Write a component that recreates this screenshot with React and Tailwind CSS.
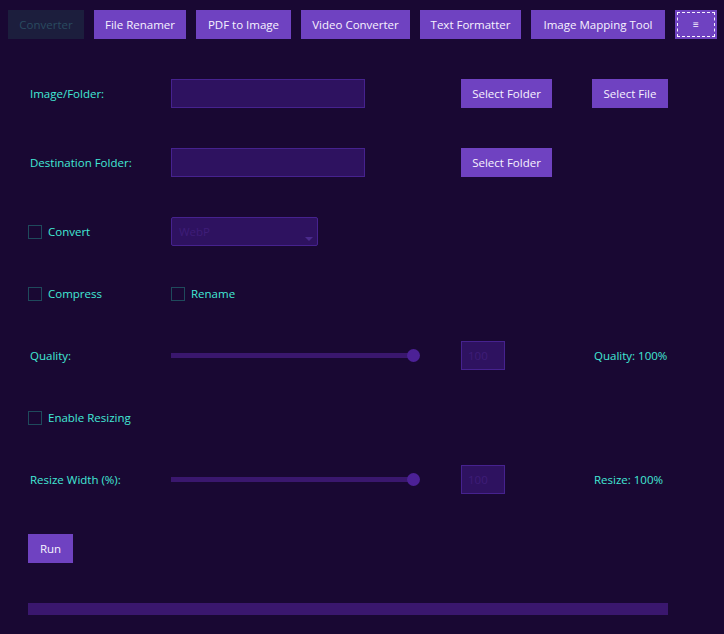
const navItems = [
  ['File Renamer', 'w-[92px]'],
  ['PDF to Image', 'w-[95px]'],
  ['Video Converter', 'w-[109px]'],
  ['Text Formatter', 'w-[101px]'],
  ['Image Mapping Tool', 'w-[134px]'],
];

const Btn = ({ children, className = '' }) => (
  <button className={`h-[29px] shrink-0 whitespace-nowrap bg-[#6f42c1] text-[#f7f2ff] ${className}`}>{children}</button>
);

const Label = ({ children }) => <span className="whitespace-nowrap pl-[2px] text-[#42e8d6]">{children}</span>;

const Check = ({ label }) => (
  <label className="flex items-center gap-[6px] whitespace-nowrap text-[#42e8d6]">
    <span className="h-[14px] w-[14px] border border-[#1f4a5c]" />
    {label}
  </label>
);

const Slider = () => (
  <div className="relative flex h-[29px] w-[250px] items-center">
    <div className="h-[5px] w-[243px] bg-[#3a176e]" />
    <div className="absolute left-[236px] top-[8px] h-[13px] w-[13px] rounded-full bg-[#4c2196]" />
  </div>
);

const Spin = () => (
  <div className="flex h-[29px] w-[44px] items-center border border-[#46228f] bg-[#2e1260] pl-[6px] text-[#3e1d78]">100</div>
);

const Row = ({ children, className = '' }) => (
  <div className={`grid h-[29px] grid-cols-[143px_290px_131px_1fr] items-center ${className}`}>{children}</div>
);

export default function App() {
  return (
    <div className="h-[634px] w-[724px] bg-[#190833] text-[11.5px] font-['Open_Sans',sans-serif]">
      <div className="flex gap-[10px] pl-[8px] pt-[10px]">
        <button className="h-[29px] w-[76px] shrink-0 bg-[#1c1e3d] text-[#2a4b60]">Converter</button>
        {navItems.map(([n, w]) => (
          <Btn key={n} className={w}>{n}</Btn>
        ))}
        <button className="flex h-[29px] w-[42px] shrink-0 items-center justify-center bg-[#6f42c1] p-[2px]">
          <span className="flex h-full w-full items-center justify-center border border-dashed border-[#f7f2ff] text-[10px] text-[#f7f2ff]">≡</span>
        </button>
      </div>

      <div className="pl-[28px]">
        <Row className="mt-[40px]">
          <Label>Image/Folder:</Label>
          <div className="h-[29px] w-[194px] border border-[#46228f] bg-[#2e1260]" />
          <div><Btn className="w-[91px]">Select Folder</Btn></div>
          <div><Btn className="w-[76px]">Select File</Btn></div>
        </Row>

        <Row className="mt-[40px]">
          <Label>Destination Folder:</Label>
          <div className="h-[29px] w-[194px] border border-[#46228f] bg-[#2e1260]" />
          <div><Btn className="w-[91px]">Select Folder</Btn></div>
          <div />
        </Row>

        <Row className="mt-[40px]">
          <Check label="Convert" />
          <div className="relative flex h-[29px] w-[147px] items-center rounded-[2px] border border-[#46228f] bg-[#2e1260] pl-[7px] text-[#3e1d78]">
            WebP
            <svg className="absolute right-[4px] top-[19px]" width="8" height="5" viewBox="0 0 8 5">
              <path d="M0 0h8L4 4z" fill="#4a2a8c" />
            </svg>
          </div>
          <div />
          <div />
        </Row>

        <Row className="mt-[33px]">
          <Check label="Compress" />
          <Check label="Rename" />
          <div />
          <div />
        </Row>

        <Row className="mt-[33px]">
          <Label>Quality:</Label>
          <Slider />
          <Spin />
          <Label>Quality: 100%</Label>
        </Row>

        <Row className="mt-[33px]">
          <Check label="Enable Resizing" />
          <div />
          <div />
          <div />
        </Row>

        <Row className="mt-[33px]">
          <Label>Resize Width (%):</Label>
          <Slider />
          <Spin />
          <Label>Resize: 100%</Label>
        </Row>

        <div className="mt-[40px]">
          <Btn className="w-[45px]">Run</Btn>
        </div>

        <div className="mt-[40px] h-[12px] w-[640px] bg-[#3a176e]" />
      </div>
    </div>
  );
}
